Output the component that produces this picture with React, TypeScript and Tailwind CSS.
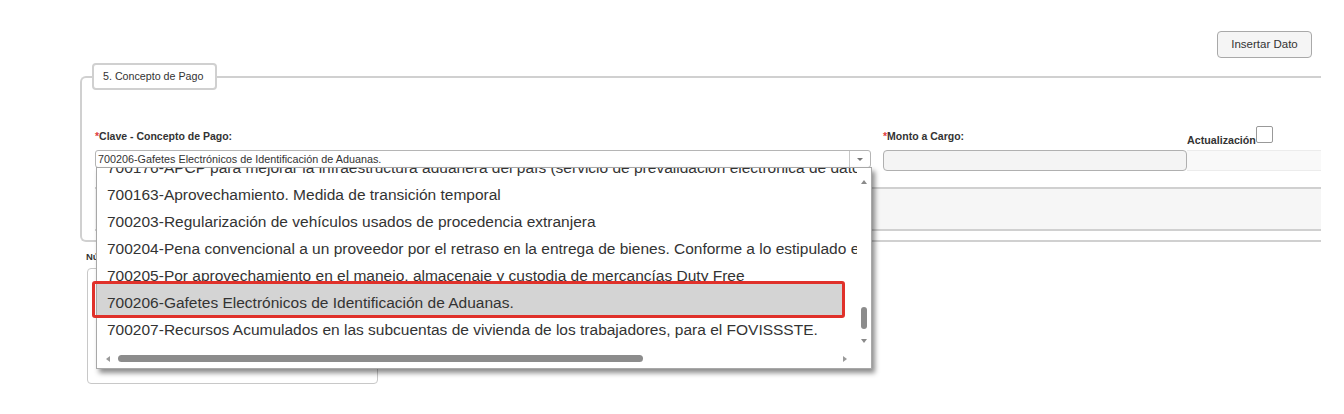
const items = [
  '700176-APCP para mejorar la infraestructura aduanera del país (servicio de prevalidación electrónica de datos)',
  '700163-Aprovechamiento. Medida de transición temporal',
  '700203-Regularización de vehículos usados de procedencia extranjera',
  '700204-Pena convencional a un proveedor por el retraso en la entrega de bienes. Conforme a lo estipulado en el contrato',
  '700205-Por aprovechamiento en el manejo, almacenaje y custodia de mercancías Duty Free',
  '700206-Gafetes Electrónicos de Identificación de Aduanas.',
  '700207-Recursos Acumulados en las subcuentas de vivienda de los trabajadores, para el FOVISSSTE.',
];

function Dropdown() {
  return (
    <div className="absolute left-[1px] top-[17px] z-20 flex h-[202px] w-[776px] flex-col border border-[#a8a8a8] bg-white shadow-[3px_4px_5px_rgba(0,0,0,0.45)]">
      <div className="flex h-[181px]">
        <div className="flex-1 overflow-hidden">
          <div className="-mt-[14px]">
            {items.map((t, i) => (
              <div key={t} className={`relative flex h-[27px] items-center whitespace-nowrap pl-[10px] text-[15.5px] ${i === 5 ? 'z-10' : ''}`}>
                {i === 5 && <span className="absolute -top-[5px] bottom-0 left-0 right-[15px] bg-[#d4d4d4]" />}
                <span className="relative">{t}</span>
              </div>
            ))}
          </div>
        </div>
        <div className="flex w-[14px] flex-col items-center">
          <span className="mt-[12px] border-x-[3px] border-b-[4px] border-x-transparent border-b-[#8a8a8a]" />
          <span className="mt-[123px] h-[22px] w-[6px] rounded-full bg-[#8c8c8c]" />
          <span className="mt-[10px] border-x-[3px] border-t-[4px] border-x-transparent border-t-[#8a8a8a]" />
        </div>
      </div>
      <div className="flex h-[19px] items-center">
        <span className="ml-[9px] border-y-[3px] border-r-[4px] border-y-transparent border-r-[#9a9a9a]" />
        <span className="ml-[8px] h-[7px] w-[525px] rounded-full bg-[#8c8c8c]" />
        <span className="ml-auto mr-[24px] border-y-[3px] border-l-[4px] border-y-transparent border-l-[#9a9a9a]" />
      </div>
      <div className="pointer-events-none absolute -left-[5px] top-[113px] z-30 h-[37px] w-[753px] rounded-[3px] border-[3px] border-[#e0312a]" />
    </div>
  );
}

export default function App() {
  return (
    <div className="relative h-[414px] w-[1344px] overflow-hidden bg-white font-['Liberation_Sans',Arial,sans-serif] text-[#333]">
      <div className="flex justify-end pr-[32px] pt-[31px]">
        <button className="h-[27px] w-[95px] rounded-[4px] border border-[#a9a9a9] bg-[#f5f5f5] text-[11.5px] text-[#333]">
          Insertar Dato
        </button>
      </div>

      <fieldset className="ml-[80px] mt-[5px] w-[1241px] rounded-l-[6px] border-2 border-r-0 border-[#d0d0d0] pb-[9px]">
        <legend className="ml-[10px] h-[27px] w-[125px] rounded-[4px] border-2 border-[#d0d0d0] bg-white px-[9px] text-[10.7px] leading-[23px]">
          5. Concepto de Pago
        </legend>

        <div className="mt-[36px] flex pl-[13px]">
          <div className="w-[776px]">
            <div className="flex h-[17px] items-end pb-[1px] text-[10.5px] font-bold leading-[12px]">
              <span className="text-[#e04040]">*</span>Clave - Concepto de Pago:
            </div>
            <div className="relative mt-[7px]">
              <div className="flex h-[18px] items-center rounded-[3px] border border-[#b5b5b5] bg-white">
                <span className="flex-1 pl-[2px] text-[10.8px] leading-none">
                  700206-Gafetes Electrónicos de Identificación de Aduanas.
                </span>
                <span className="flex h-full w-[21px] items-center justify-center border-l border-[#c8c8c8]">
                  <span className="border-x-[3px] border-t-[3px] border-x-transparent border-t-[#777]" />
                </span>
              </div>
              <Dropdown />
            </div>
          </div>

          <div className="ml-[12px] w-[304px]">
            <div className="flex h-[17px] items-end pb-[1px] text-[10.5px] font-bold leading-[12px]">
              <span className="text-[#e04040]">*</span>Monto a Cargo:
            </div>
            <div className="mt-[7px] h-[21px] rounded-[4px] border border-[#b0b0b0] bg-[#f4f4f4]" />
          </div>

          <div className="flex-1">
            <div className="flex h-[17px] items-end">
              <span className="-mb-[3px] text-[10.7px] font-bold leading-[12px]">Actualización</span>
              <span className="h-[17px] w-[17px] self-start rounded-[2px] border border-[#999] bg-white" />
            </div>
            <div className="mt-[7px] h-[21px] border-y border-[#ececec] bg-[#f9f9f9]" />
          </div>
        </div>

        <div className="ml-[13px] mt-[16px] h-[44px] border-y-2 border-[#d0d0d0] bg-[#f6f6f6]" />
      </fieldset>

      <div className="ml-[86px] mt-[9px]">
        <div className="text-[9.5px] font-bold leading-[12px]">Número de Operación:</div>
        <div className="ml-[1px] mt-[5px] h-[116px] w-[291px] rounded-[4px] border border-[#c8c8c8]" />
      </div>
    </div>
  );
}
